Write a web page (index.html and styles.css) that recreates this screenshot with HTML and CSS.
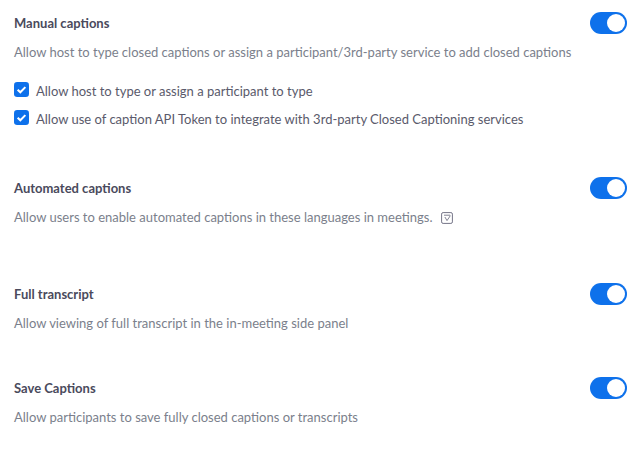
FILE: index.html
```html
<!DOCTYPE html>
<html>
<head>
    <title>Captions settings</title>
    <link rel="stylesheet" href="styles.css">
</head>
<body>
    <div class="setting setting-manual">
        <div class="setting-head">
            <h3>Manual captions</h3>
            <span class="toggle"></span>
        </div>
        <p class="desc">Allow host to type closed captions or assign a participant/3rd-party service to add closed captions</p>
        <div class="check-list">
            <label class="check">
                <svg class="check-box" viewBox="0 0 14 14"><rect width="14" height="14" rx="3" fill="#0e71eb"/><path d="M3.4 7.2l2.5 2.4 4.7-4.8" fill="none" stroke="#fff" stroke-width="1.9"/></svg>
                Allow host to type or assign a participant to type
            </label>
            <label class="check">
                <svg class="check-box" viewBox="0 0 14 14"><rect width="14" height="14" rx="3" fill="#0e71eb"/><path d="M3.4 7.2l2.5 2.4 4.7-4.8" fill="none" stroke="#fff" stroke-width="1.9"/></svg>
                Allow use of caption API Token to integrate with 3rd-party Closed Captioning services
            </label>
        </div>
    </div>

    <div class="setting setting-auto">
        <div class="setting-head">
            <h3>Automated captions</h3>
            <span class="toggle"></span>
        </div>
        <p class="desc">Allow users to enable automated captions in these languages in meetings.
            <svg class="info-icon" viewBox="0 0 12 12"><rect x="0.6" y="0.6" width="10.8" height="10.8" rx="1.5" fill="none" stroke="#747487" stroke-width="1"/><path d="M3 3.2h6M3.9 5l2.1 3.6L9.4 3.6" fill="none" stroke="#747487" stroke-width="0.9"/></svg>
        </p>
    </div>

    <div class="setting setting-full">
        <div class="setting-head">
            <h3>Full transcript</h3>
            <span class="toggle"></span>
        </div>
        <p class="desc">Allow viewing of full transcript in the in-meeting side panel</p>
    </div>

    <div class="setting">
        <div class="setting-head">
            <h3>Save Captions</h3>
            <span class="toggle"></span>
        </div>
        <p class="desc">Allow participants to save fully closed captions or transcripts</p>
    </div>
</body>
</html>
```

FILE: styles.css
```css
body {
    margin: 0;
    padding: 12px 13px 0 14px;
    background-color: #fff;
    font-family: Lato, sans-serif;
    font-size: 13px;
    color: #7b7f8c;
    overflow: hidden;
}

.setting-head {
    display: flex;
    justify-content: space-between;
    align-items: center;
    height: 22px;
}

.setting-head h3 {
    margin: 0;
    font-size: 13px;
    font-weight: 700;
    color: #4a4a5c;
}

.toggle {
    position: relative;
    display: block;
    width: 37px;
    height: 22px;
    border-radius: 11px;
    background-color: #0e71eb;
}

.toggle::after {
    content: "";
    position: absolute;
    top: 2px;
    right: 2px;
    width: 18px;
    height: 18px;
    border-radius: 50%;
    background-color: #fff;
}

.desc {
    margin: 8px 0 0;
    line-height: 20px;
    color: #7b7f8c;
}

.setting-manual {
    height: 165px;
}

.setting-auto {
    height: 106px;
}

.setting-full {
    height: 94px;
}

.check-list {
    margin-top: 19px;
}

.check {
    display: flex;
    align-items: center;
    gap: 7px;
    height: 20px;
    margin-bottom: 8px;
    color: #5a5a6b;
}

.check-box {
    width: 15px;
    height: 15px;
    margin-top: -3px;
    flex: none;
}

.info-icon {
    width: 12px;
    height: 12px;
    margin-left: 5px;
    vertical-align: -2px;
}
```
